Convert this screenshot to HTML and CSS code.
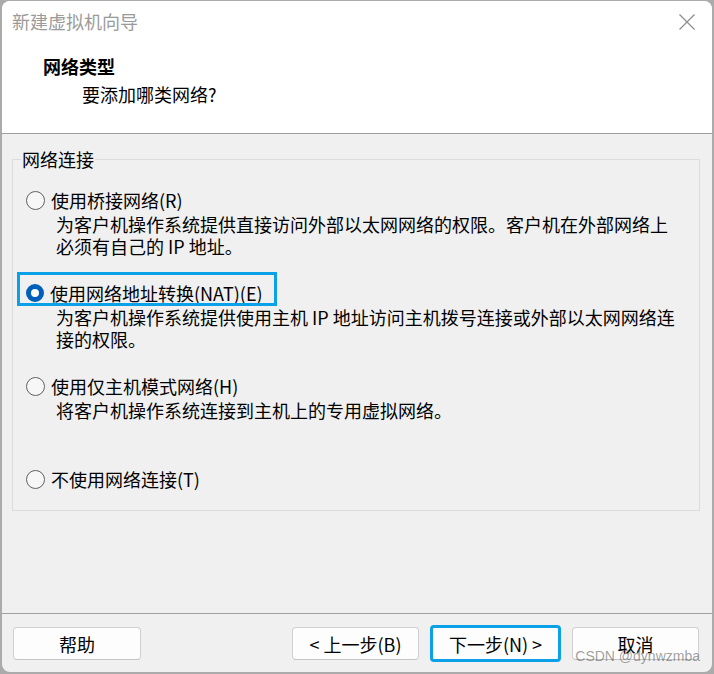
FILE: index.html
```html
<!DOCTYPE html>
<html lang="zh-CN">
<head>
<meta charset="utf-8">
<title>新建虚拟机向导</title>
<link rel="stylesheet" href="styles.css">
</head>
<body>
<div class="window">
  <div class="titlebar">
    <span class="title">新建虚拟机向导</span>
    <svg class="close" width="16" height="16" viewBox="0 0 16 16" aria-hidden="true">
      <path d="M0.5 0.5 L15.5 15.5 M15.5 0.5 L0.5 15.5" stroke="#8c8c8c" stroke-width="1.2" fill="none"/>
    </svg>
  </div>
  <div class="header">
    <div class="h-title">网络类型</div>
    <div class="h-sub">要添加哪类网络?</div>
  </div>
  <div class="content">
    <fieldset class="group">
      <legend>网络连接</legend>
      <div class="options">
        <div class="option">
          <div class="opt-label"><span class="radio"></span><span>使用桥接网络(R)</span></div>
          <div class="opt-desc">为客户机操作系统提供直接访问外部以太网网络的权限。客户机在外部网络上<br>必须有自己的 IP 地址。</div>
        </div>
        <div class="option">
          <div class="opt-label selected"><span class="radio checked"></span><span>使用网络地址转换(NAT)(E)</span></div>
          <div class="opt-desc">为客户机操作系统提供使用主机 IP 地址访问主机拨号连接或外部以太网网络连<br>接的权限。</div>
        </div>
        <div class="option">
          <div class="opt-label"><span class="radio"></span><span>使用仅主机模式网络(H)</span></div>
          <div class="opt-desc">将客户机操作系统连接到主机上的专用虚拟网络。</div>
        </div>
        <div class="option last">
          <div class="opt-label"><span class="radio"></span><span>不使用网络连接(T)</span></div>
        </div>
      </div>
    </fieldset>
  </div>
  <div class="footer">
    <button class="btn help">帮助</button>
    <div class="nav">
      <button class="btn">&lt; 上一步(B)</button>
      <button class="btn primary">下一步(N) &gt;</button>
      <button class="btn">取消</button>
    </div>
    <span class="watermark">CSDN @dynwzmba</span>
  </div>
</div>
</body>
</html>
```

FILE: styles.css
```css
html, body {
  margin: 0;
  padding: 0;
}
body {
  background: #ababab;
  width: 714px;
  height: 674px;
  overflow: hidden;
  font-family: "Noto Sans CJK SC", "Noto Sans", sans-serif;
  color: #000;
}
.window {
  margin: 1px 0 0 2px;
  width: 710px;
  height: 671px;
  border-radius: 8px;
  background: #f0f0f0;
  overflow: hidden;
  display: flex;
  flex-direction: column;
}
.titlebar {
  height: 40px;
  flex: none;
  background: #fff;
  display: flex;
  align-items: center;
  justify-content: space-between;
  padding: 0 17px 0 10px;
}
.title {
  font-size: 18px;
  line-height: 24px;
  color: #9a9a9a;
}
.close {
  display: block;
  margin-top: 2px;
}
.header {
  height: 79px;
  flex: none;
  background: #fff;
  border-bottom: 1px solid #a0a0a0;
  padding-top: 13px;
  box-sizing: content-box;
}
.h-title {
  font-size: 18px;
  line-height: 24px;
  font-weight: 700;
  padding-left: 41px;
}
.h-sub {
  font-size: 18px;
  line-height: 24px;
  margin-top: 4px;
  padding-left: 80px;
}
.content {
  flex: 1;
  padding: 13px 12px 0 10px;
}
.group {
  margin: 0;
  border: 1px solid #dcdcdc;
  padding: 17px 0 19px 13px;
  min-width: 0;
}
.group legend {
  font-size: 18px;
  line-height: 24px;
  padding: 0 1px;
  margin-left: -5px;
}
.options {
  display: flex;
  flex-direction: column;
  gap: 24px;
}
.option {
  display: flex;
  flex-direction: column;
  align-items: flex-start;
  min-height: 69px;
}
.option.last {
  min-height: 0;
}
.opt-label {
  display: flex;
  align-items: center;
  gap: 6px;
  height: 24px;
  font-size: 18px;
  line-height: 24px;
  position: relative;
}
.opt-label.selected::after {
  content: "";
  position: absolute;
  left: -9px;
  top: -9px;
  right: -14px;
  bottom: -1px;
  border: 3px solid #0ba1e8;
}
.radio {
  width: 17px;
  height: 17px;
  border: 1px solid #606060;
  border-radius: 50%;
  background: #f7f7f7;
  flex: none;
  box-sizing: content-box;
}
.radio.checked {
  width: 8px;
  height: 8px;
  border: 5.5px solid #005fb8;
  background: #fff;
}
.opt-desc {
  font-size: 18px;
  line-height: 22px;
  margin: 1px 0 0 30px;
  white-space: nowrap;
}
.footer {
  flex: none;
  position: relative;
  border-top: 1px solid #a0a0a0;
  padding: 13px 13px 12px 11px;
  display: flex;
  justify-content: space-between;
  align-items: center;
}
.nav {
  display: flex;
  gap: 13px;
}
.btn {
  width: 127px;
  height: 33px;
  margin: 0;
  padding: 0;
  border: 1px solid #d0d0d0;
  border-bottom-color: #c4c4c4;
  border-radius: 4px;
  background: #fdfdfd;
  font-family: "Noto Sans CJK SC", "Noto Sans", sans-serif;
  font-size: 18px;
  line-height: 24px;
  color: #000;
}
.btn.help {
  width: 128px;
}
.btn.primary {
  outline: 3px solid #0ba1e8;
  outline-offset: -1px;
  border-radius: 2px;
}
.watermark {
  position: absolute;
  right: 12px;
  bottom: 8px;
  font-family: "Liberation Sans", Arial, sans-serif;
  font-size: 14px;
  line-height: 16px;
  color: rgba(80, 80, 80, 0.55);
}
```
